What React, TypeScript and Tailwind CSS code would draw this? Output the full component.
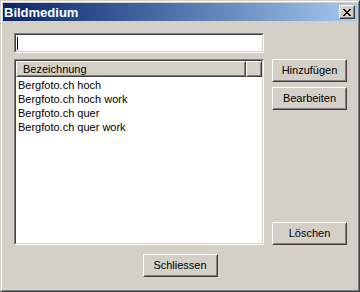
import React from "react";

const raised =
  "border border-t-white border-l-white border-r-[#404040] border-b-[#404040]";
const raisedInner =
  "border border-t-[#d4d0c8] border-l-[#d4d0c8] border-r-[#808080] border-b-[#808080]";
const sunken =
  "border border-t-[#808080] border-l-[#808080] border-r-white border-b-white";
const sunkenInner =
  "border border-t-[#404040] border-l-[#404040] border-r-[#d4d0c8] border-b-[#d4d0c8]";

function Button({ label }: { label: string }) {
  return (
    <div className={`w-[75px] h-[23px] bg-[#d4d0c8] ${raised}`}>
      <div
        className={`w-full h-full ${raisedInner} flex items-center justify-center text-[11px] text-black`}
      >
        {label}
      </div>
    </div>
  );
}

function CloseGlyph() {
  const rows = [
    "XX....XX",
    ".XX..XX.",
    "..XXXX..",
    "...XX...",
    "..XXXX..",
    ".XX..XX.",
    "XX....XX",
  ];
  return (
    <svg width="8" height="7" viewBox="0 0 8 7" shapeRendering="crispEdges">
      {rows.map((r, y) =>
        r.split("").map((c, x) =>
          c === "X" ? <rect key={`${x}-${y}`} x={x} y={y} width="1" height="1" fill="#000" /> : null
        )
      )}
    </svg>
  );
}

export default function App() {
  const items = [
    "Bergfoto.ch hoch",
    "Bergfoto.ch hoch work",
    "Bergfoto.ch quer",
    "Bergfoto.ch quer work",
  ];
  return (
    <div
      className="w-[360px] h-[292px] bg-[#d4d0c8] border border-t-[#d4d0c8] border-l-[#d4d0c8] border-r-[#404040] border-b-[#404040]"
      style={{ fontFamily: '"Liberation Sans", Arial, sans-serif' }}
    >
      <div className="w-full h-full border border-t-white border-l-white border-r-[#808080] border-b-[#808080] p-px flex flex-col">
        {/* Title bar */}
        <div className="h-[18px] flex items-center bg-gradient-to-r from-[#0a246a] to-[#a6caf0] pl-[1px] pr-[2px]">
          <span className="text-white font-bold text-[13px] leading-none flex-1">
            Bildmedium
          </span>
          <div className={`w-[16px] h-[14px] bg-[#d4d0c8] ${raised}`}>
            <div className={`w-full h-full ${raisedInner} flex items-center justify-center`}>
              <CloseGlyph />
            </div>
          </div>
        </div>

        {/* Body */}
        <div className="flex flex-col pt-[12px]">
          <div className="flex pl-[11px]">
            <div className="w-[250px] flex flex-col">
              <div className={`h-[20px] bg-white ${sunken}`}>
                <div className={`w-full h-full ${sunkenInner} flex items-center pl-[1px]`}>
                  <div className="w-px h-[13px] bg-black" />
                </div>
              </div>
              <div className={`mt-[6px] h-[186px] bg-white ${sunken}`}>
                <div className={`w-full h-full ${sunkenInner} flex flex-col`}>
                  <div className="flex h-[16px] shrink-0">
                    <div className={`w-[230px] h-full bg-[#d4d0c8] ${raised}`}>
                      <div className={`w-full h-full ${raisedInner} flex items-center pl-[5px] text-[11px] text-black`}>
                        Bezeichnung
                      </div>
                    </div>
                    <div className={`flex-1 h-full bg-[#d4d0c8] ${raised}`}>
                      <div className={`w-full h-full ${raisedInner}`} />
                    </div>
                  </div>
                  <div className="flex flex-col pt-[1px]">
                    {items.map((it) => (
                      <div key={it} className="h-[14px] leading-[14px] pl-[2px] text-[11px] text-black">
                        {it}
                      </div>
                    ))}
                  </div>
                </div>
              </div>
            </div>
            <div className="ml-[8px] pt-[26px] flex flex-col">
              <Button label="Hinzufügen" />
              <div className="mt-[5px]">
                <Button label="Bearbeiten" />
              </div>
              <div className="mt-auto">
                <Button label="Löschen" />
              </div>
            </div>
          </div>
          <div className="flex justify-center mt-[9px]">
            <Button label="Schliessen" />
          </div>
        </div>
      </div>
    </div>
  );
}
